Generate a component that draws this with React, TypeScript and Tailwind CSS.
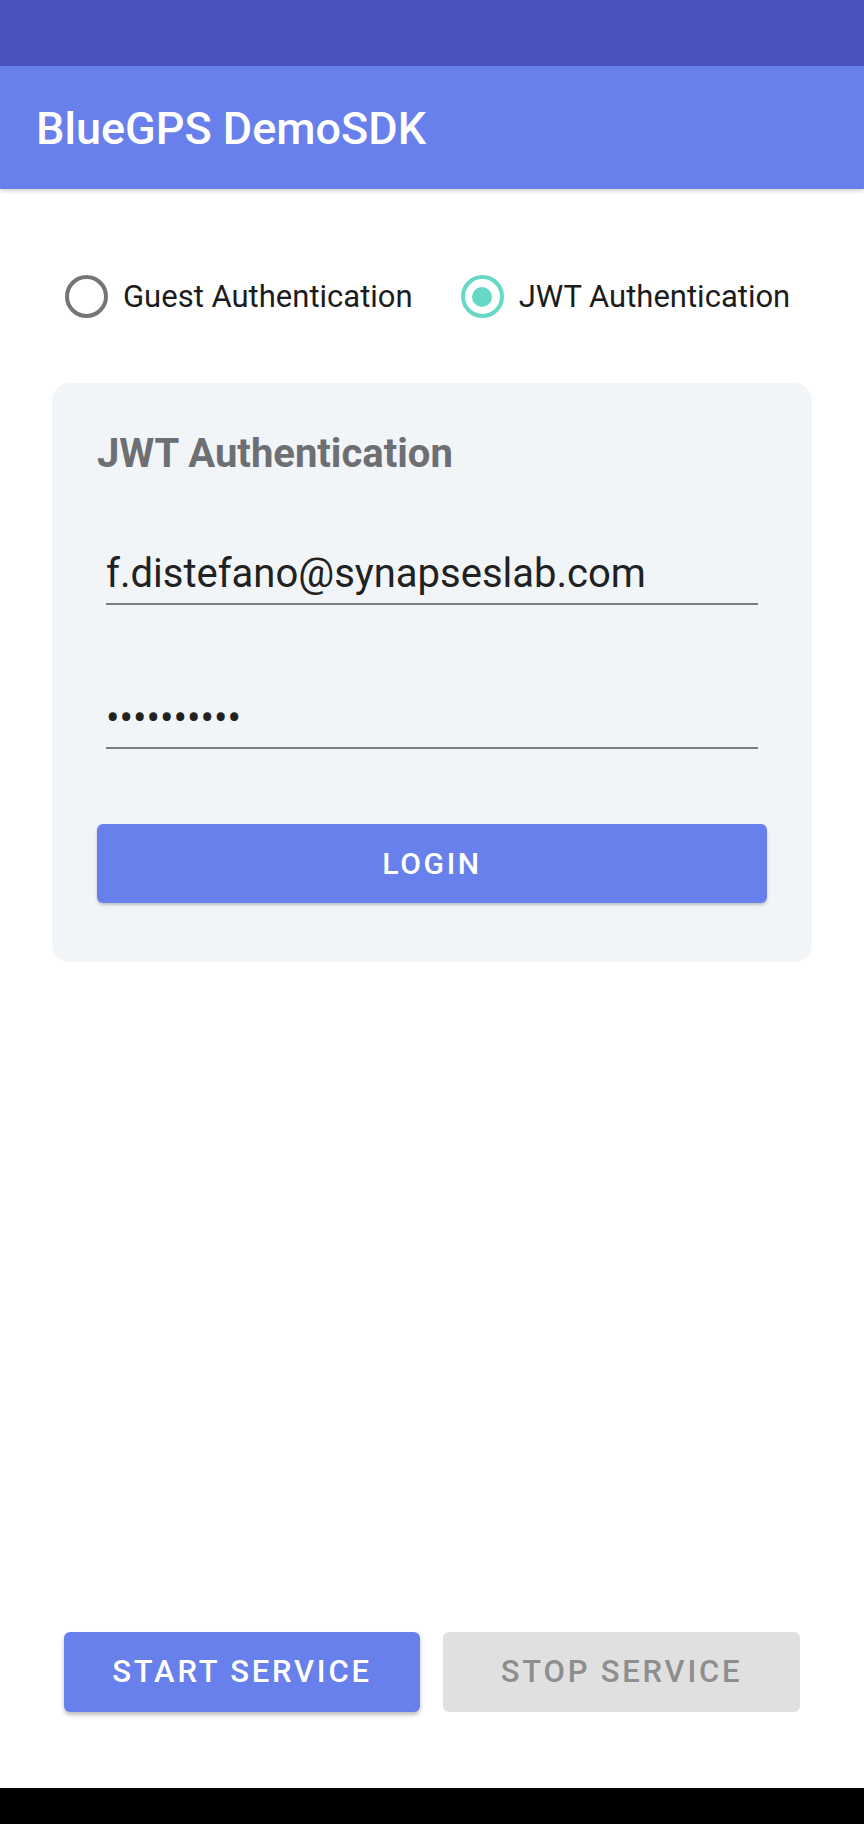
import { useState } from 'react'

function Radio({ checked, label, onClick }: { checked: boolean; label: string; onClick: () => void }) {
  return (
    <button type="button" onClick={onClick} className="flex items-center gap-[15px]">
      <span
        className={`flex h-[43px] w-[43px] items-center justify-center rounded-full border-[4px] ${
          checked ? 'border-[#66d9c6]' : 'border-[#757575]'
        }`}
      >
        {checked && <span className="h-[20px] w-[20px] rounded-full bg-[#66d9c6]" />}
      </span>
      <span className="text-[31px] leading-none text-[#1c1c1c]">{label}</span>
    </button>
  )
}

export default function App() {
  const [mode, setMode] = useState<'guest' | 'jwt'>('jwt')

  return (
    <div className="flex h-[1824px] w-[864px] flex-col bg-white font-['Roboto','Liberation_Sans',sans-serif]">
      {/* status bar */}
      <div className="h-[66px] bg-[#4c53c0]" />

      {/* app bar */}
      <header className="relative z-10 flex h-[123px] items-center bg-[#6880eb] pl-[36px] shadow-[0_2px_4px_rgba(0,0,0,0.18)]">
        <h1 className="mt-[2px] text-[45px] font-medium leading-none text-white">BlueGPS DemoSDK</h1>
      </header>

      <main className="flex flex-1 flex-col">
        <div className="mt-[86px] flex items-center gap-[48px] pl-[65px]">
          <Radio checked={mode === 'guest'} label="Guest Authentication" onClick={() => setMode('guest')} />
          <Radio checked={mode === 'jwt'} label="JWT Authentication" onClick={() => setMode('jwt')} />
        </div>

        <section className="mx-[52px] mt-[65px] rounded-[18px] bg-[#f2f5f8] px-[45px] pt-[51px] pb-[59px]">
          <h2 className="text-[40px] font-bold leading-none text-[#6d6f73]">JWT Authentication</h2>

          <div className="mx-[9px] mt-[80px] border-b-[2px] border-[#7d7d7d] pb-[9px]">
            <div className="text-[40px] leading-none text-[#212121]">f.distefano@synapseslab.com</div>
          </div>

          <div className="mx-[9px] mt-[94px] border-b-[2px] border-[#7d7d7d] pb-[8px]">
            <div className="text-[40px] leading-none text-[#212121]">••••••••••</div>
          </div>

          <button
            type="button"
            className="mt-[75px] flex h-[79px] w-full items-center justify-center rounded-[6px] bg-[#6880eb] text-[30px] font-medium tracking-[0.09em] text-white shadow-[0_2px_3px_rgba(0,0,0,0.22)]"
          >
            LOGIN
          </button>
        </section>

        <div className="mt-auto mb-[76px] flex gap-[23px] pl-[64px] pr-[64px]">
          <button
            type="button"
            className="flex h-[80px] w-[356px] items-center justify-center rounded-[6px] bg-[#6880eb] text-[31px] font-medium tracking-[0.09em] text-white shadow-[0_3px_4px_rgba(0,0,0,0.25)]"
          >
            START SERVICE
          </button>
          <button
            type="button"
            className="flex h-[80px] w-[357px] items-center justify-center rounded-[6px] bg-[#e0e0e0] text-[31px] font-medium tracking-[0.09em] text-[#8e8e8e]"
          >
            STOP SERVICE
          </button>
        </div>
      </main>

      {/* navigation bar */}
      <div className="h-[36px] bg-black" />
    </div>
  )
}
